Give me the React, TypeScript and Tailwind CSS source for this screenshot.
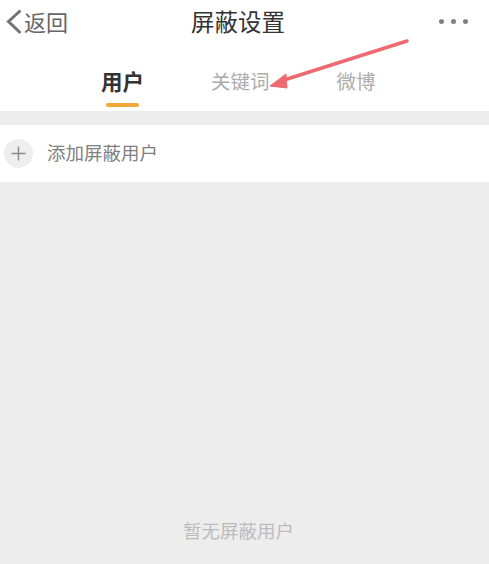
import React from 'react';

const font = { fontFamily: "'Noto Sans CJK SC', sans-serif" };

export default function App() {
  return (
    <div className="relative w-[489px] h-[564px] flex flex-col overflow-hidden bg-[#ededed]" style={font}>
      <header className="h-[47px] bg-white flex items-start justify-between pl-[5px] pr-[21px] relative">
        <div className="flex items-center gap-[1px] text-[#666666] mt-[8px]">
          <svg width="18" height="28" viewBox="0 0 18 28" fill="none">
            <path d="M15.5 2.5 L3.5 13.5 L15.5 25" stroke="#737373" strokeWidth="3" />
          </svg>
          <span className="text-[22px] leading-none -mt-[2px]">返回</span>
        </div>
        <div className="absolute left-[191px] top-[6px] text-[23.5px] leading-[30px] text-[#333333] whitespace-nowrap">屏蔽设置</div>
        <div className="flex items-center gap-[7px] mt-[19px]">
          <span className="w-[5px] h-[5px] rounded-full bg-[#808080]" />
          <span className="w-[5px] h-[5px] rounded-full bg-[#808080]" />
          <span className="w-[5px] h-[5px] rounded-full bg-[#808080]" />
        </div>
      </header>

      <nav className="h-[64px] bg-white flex items-start pl-[101px]">
        <div className="w-[43px] flex flex-col items-center pt-[20px]">
          <span className="text-[21.5px] leading-[28px] font-bold text-[#333333] whitespace-nowrap">用户</span>
          <span className="w-[33px] h-[4px] mt-[8px] rounded-full bg-[#f5a83a]" />
        </div>
        <span className="ml-[67px] mt-[20px] text-[19.5px] leading-[28px] text-[#acacac] whitespace-nowrap">关键词</span>
        <span className="ml-[67px] mt-[20px] text-[19.5px] leading-[28px] text-[#acacac] whitespace-nowrap">微博</span>
      </nav>

      <div className="mt-[14px] h-[57px] bg-white flex items-center pl-[4px]">
        <div className="w-[29px] h-[29px] rounded-full bg-[#eeeeee] flex items-center justify-center">
          <svg width="15" height="15" viewBox="0 0 15 15" fill="none">
            <path d="M7.5 0.5 V14.5 M0.5 7.5 H14.5" stroke="#8a8a8a" strokeWidth="1.4" />
          </svg>
        </div>
        <span className="ml-[14px] -mt-[3px] text-[18.5px] leading-none text-[#808080] whitespace-nowrap">添加屏蔽用户</span>
      </div>

      <div className="flex-1 flex items-end justify-start pb-[21px] pl-[183px]">
        <span className="text-[18.5px] leading-[26px] text-[#bcbcbc] whitespace-nowrap">暂无屏蔽用户</span>
      </div>

      {/* red annotation arrow */}
      <svg className="absolute left-0 top-0 pointer-events-none" width="489" height="564" viewBox="0 0 489 564" fill="none">
        <path d="M407 41 L284 80" stroke="#ee6a70" strokeWidth="3.5" strokeLinecap="round" />
        <path d="M270 86 L286 74 L287 88 Z" fill="#ee6a70" stroke="#ee6a70" strokeWidth="1" strokeLinejoin="round" />
      </svg>
    </div>
  );
}
